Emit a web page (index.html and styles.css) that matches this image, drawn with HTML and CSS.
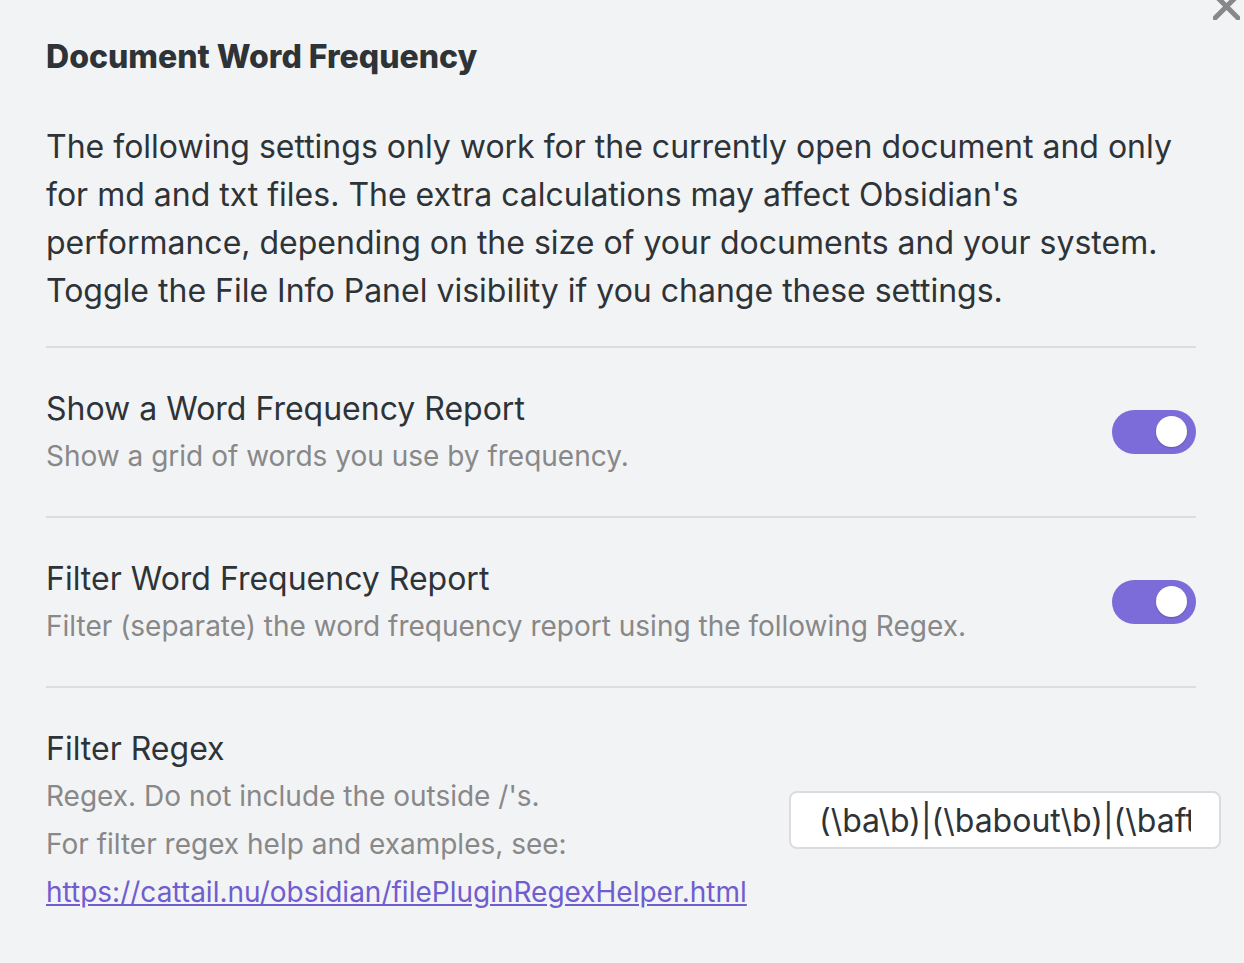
FILE: index.html
```html
<!DOCTYPE html>
<html>
<head>
<meta charset="utf-8">
<link rel="stylesheet" href="styles.css">
</head>
<body>
<div class="modal">
  <div class="close" aria-label="Close">
    <svg width="27" height="27" viewBox="0 0 27 27"><path d="M2 2 L25 25 M25 2 L2 25" stroke="#888" stroke-width="5" stroke-linecap="square"/></svg>
  </div>
  <h3 class="title">Document Word Frequency</h3>
  <p class="intro">The following settings only work for the currently open document and only for md and txt files. The extra calculations may affect Obsidian's performance, depending on the size of your documents and your system. Toggle the File Info Panel visibility if you change these settings.</p>

  <div class="setting">
    <div class="info">
      <div class="name">Show a Word Frequency Report</div>
      <div class="desc">Show a grid of words you use by frequency.</div>
    </div>
    <div class="control">
      <div class="toggle on"><span class="knob"></span></div>
    </div>
  </div>

  <div class="setting">
    <div class="info">
      <div class="name">Filter Word Frequency Report</div>
      <div class="desc">Filter (separate) the word frequency report using the following Regex.</div>
    </div>
    <div class="control">
      <div class="toggle on"><span class="knob"></span></div>
    </div>
  </div>

  <div class="setting">
    <div class="info">
      <div class="name">Filter Regex</div>
      <div class="desc">Regex. Do not include the outside /'s.</div>
      <div class="desc">For filter regex help and examples, see:</div>
      <div class="desc"><a class="link" href="#">https://cattail.nu/obsidian/filePluginRegexHelper.html</a></div>
    </div>
    <div class="control">
      <input class="text-input" type="text" value="(\ba\b)|(\babout\b)|(\bafter\b)|(\ball\b)">
    </div>
  </div>
</div>
</body>
</html>
```

FILE: styles.css
```css
html, body {
  margin: 0;
  padding: 0;
  background: #f2f3f5;
}
body {
  font-family: Inter, "Noto Sans", sans-serif;
  color: #2e3338;
  overflow: hidden;
}
.modal {
  position: relative;
  padding: 39px 48px 0 46px;
  height: 963px;
  box-sizing: border-box;
}
.close {
  position: absolute;
  top: -7px;
  right: 4px;
  width: 27px;
  height: 27px;
}
.close svg { display: block; }
.title {
  margin: 0;
  font-size: 32px;
  line-height: 36px;
  font-weight: 800;
}
.intro {
  margin: 48px 0 31px;
  font-size: 32px;
  line-height: 48px;
}
.setting {
  display: flex;
  align-items: center;
  border-top: 2px solid #dddde0;
  padding: 38px 0 36px;
}
.info {
  flex: 1;
  min-width: 0;
}
.name {
  font-size: 32px;
  line-height: 46px;
}
.desc {
  font-size: 28px;
  line-height: 48px;
  color: #888888;
}
.link {
  color: #705dcf;
  text-decoration: underline;
}
.control {
  display: flex;
  align-items: center;
  justify-content: flex-end;
  margin-top: -2px;
}
.toggle {
  position: relative;
  width: 84px;
  height: 44px;
  border-radius: 22px;
  background: #7b6cd9;
}
.knob {
  position: absolute;
  top: 6px;
  right: 9px;
  width: 31px;
  height: 31px;
  border-radius: 50%;
  background: #fff;
  box-shadow: 0 1px 2px rgba(0,0,0,0.2);
}
.text-input {
  width: 432px;
  height: 58px;
  box-sizing: border-box;
  margin-right: -25px;
  padding: 0 28px;
  border: 2px solid #dcdcdf;
  border-radius: 8px;
  background: #fff;
  font-family: Inter, "Noto Sans", sans-serif;
  font-size: 32px;
  color: #2e3338;
  outline: none;
}
```
